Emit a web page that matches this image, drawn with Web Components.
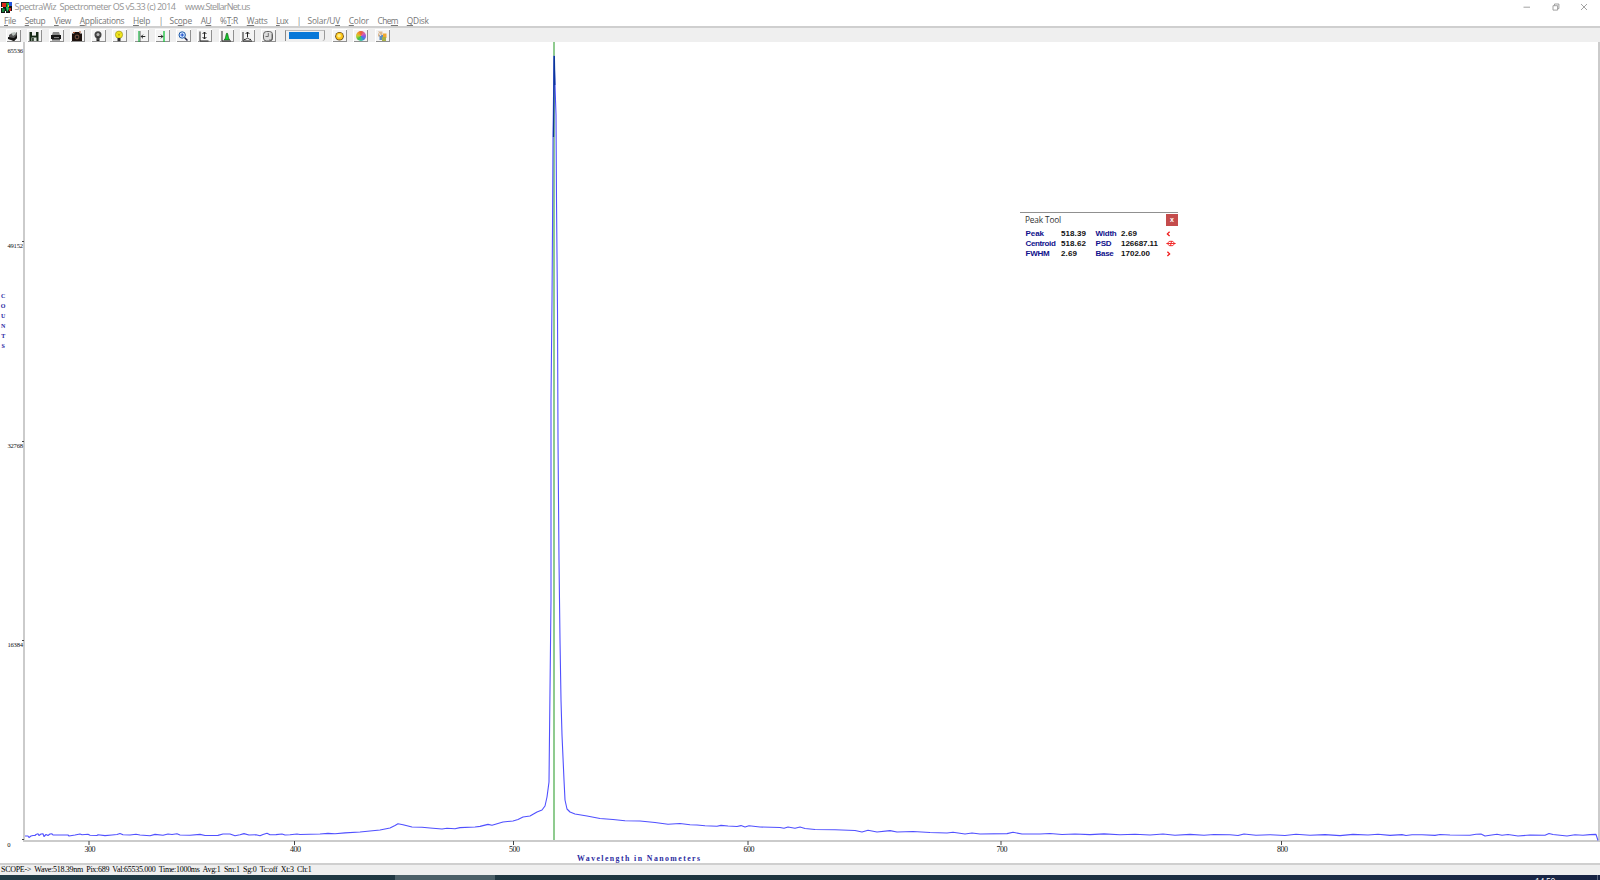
<!DOCTYPE html>
<html lang="en">
<head>
<meta charset="utf-8">
<title>SpectraWiz</title>
<style>
    html, body { margin: 0; height: 100%; overflow: hidden; background: #fff; }
</style>
</head>
<body>
<spectra-app></spectra-app>

<script>
// Inline text that is tracked in or out until it fills the given width
class FitText extends HTMLElement {
    constructor() {
        super();
        this.attachShadow({ mode: "open" });
        this.shadowRoot.innerHTML = `<style>
            :host { display: inline-block; flex: none; vertical-align: top; }
            span { white-space: pre; }
            ::slotted(u) { text-decoration-thickness: 1px; text-underline-offset: 1px; }
        </style><span><slot></slot></span>`;
    }

    connectedCallback() {
        const width = parseFloat(this.getAttribute("width"));
        const natural = this.shadowRoot.querySelector("span").getBoundingClientRect().width;
        if (!width || !natural) return;
        const gap = (width - natural) / this.textContent.length;
        this.style.letterSpacing = `${gap.toFixed(3)}px`;
        this.style.width = `${width}px`;
    }
}

class TitleBar extends HTMLElement {
    constructor() {
        super();
        this.attachShadow({ mode: "open" });
        this.shadowRoot.innerHTML = `
        <style>
            :host {
                display: flex;
                align-items: center;
                height: 14px;
                padding: 0 12px 0 1px;
                font: 9.1px/14px "Open Sans", sans-serif;
                color: #949494;
            }
            .logo { width: 11px; height: 11px; margin-right: 2.5px; }
            .site { margin-left: 9.5px; }
            .controls { display: flex; gap: 20.5px; margin-left: auto; margin-top: -1px; }
            .controls svg { width: 8px; height: 8px; fill: none; stroke: #8c8c8c; stroke-width: 0.8; }
        </style>
        <svg class="logo" viewBox="0 0 11 11">
            <rect width="11" height="11" fill="#161616"/>
            <path d="M1 1h4v4H1z" fill="#e02818"/>
            <path d="M5 1h3v4H6z" fill="#18a838"/>
            <path d="M8 0h3v4H8z" fill="#2454dc"/>
            <path d="M5 5l2-1 1 3-2 3z" fill="#20d060"/>
            <path d="M1 6l3 1-1 3H1z" fill="#14883c"/>
            <path d="M8 6h2v3H8z" fill="#d82018"/>
            <path d="M0 5h2v1H0zM4 9h1v2H4zM9 9h2v2H9z" fill="#fff"/>
            <path d="M7 3h1v2H7z" fill="#f0d820"/>
        </svg>
        <fit-text width="161">SpectraWiz  Spectrometer OS v5.33 (c) 2014</fit-text>
        <fit-text class="site" width="64.5">www.StellarNet.us</fit-text>
        <div class="controls">
            <svg viewBox="0 0 8 8"><path d="M.5 4.2h6.5"/></svg>
            <svg viewBox="0 0 8 8"><path d="M1 2.7h4.6v4.4H1zM2.5 2.5V1h4.4v4.6H5.8"/></svg>
            <svg viewBox="0 0 8 8"><path d="M1 1l6 6M7 1L1 7"/></svg>
        </div>`;
    }
}

const MENU = [
    ["<u>F</u>ile", 12], ["<u>S</u>etup", 20.5], ["<u>V</u>iew", 17], ["<u>A</u>pplications", 44.5],
    ["<u>H</u>elp", 17], ["|", 2], ["Sc<u>o</u>pe", 22.5], ["A<u>U</u>", 10.5], ["%<u>T</u>:R", 18],
    ["<u>W</u>atts", 20.5], ["<u>L</u>ux", 12], ["|", 2], ["Solar/U<u>V</u>", 32.5],
    ["<u>C</u>olor", 20], ["Che<u>m</u>", 20.5], ["<u>Q</u>Disk", 22]
];

class MenuBar extends HTMLElement {
    constructor() {
        super();
        this.attachShadow({ mode: "open" });
        this.shadowRoot.innerHTML = `
        <style>
            :host {
                display: flex;
                box-sizing: border-box;
                gap: 8.75px;
                height: 12px;
                padding: 0 0 0 4px;
                font: 8.4px/13px "Open Sans", sans-serif;
                color: #767676;
            }
        </style>
        ${MENU.map(([label, width]) => `<fit-text width="${width}">${label}</fit-text>`).join("")}`;
    }
}

// Drawn on a 12x12 grid
const ICONS = {
    open: `<path d="M2 5l3-2 2 1 3-2v6l-3 3-5-2z" fill="#555"/><path d="M1 7l6 1 3-3v3l-3 3-6-2z" fill="#111"/><path d="M4 3l4-1 1 2-3 2z" fill="#b8c0bc"/>`,
    save: `<path d="M1.5 2h9v9h-9z" fill="#142814"/><path d="M4 2h4v3.6H4z" fill="#eee"/><path d="M3.5 7.5h5V11h-5z" fill="#d8e0d8"/><path d="M4.2 8h1.5v3H4.2z" fill="#142814"/>`,
    print: `<path d="M3 2h6l1 3H2z" fill="#888"/><path d="M1 5h10v4H1z" fill="#151515"/><path d="M2 9h8v1.5H2z" fill="#555"/><path d="M4 7.6h5" stroke="#aaa" stroke-width=".8"/>`,
    camera: `<path d="M1 3.5h2L4 2h4l1 1.5h2V11H1z" fill="#1c120e"/><circle cx="6" cy="7" r="2.4" fill="#6c4a3a"/><circle cx="6" cy="7" r="1.2" fill="#111"/><path d="M2 2.5h2M8 2h2" stroke="#a8502c"/>`,
    bulbOff: `<circle cx="6" cy="4.7" r="3.5" fill="#444"/><circle cx="6" cy="4.5" r="1.5" fill="#bbb"/><path d="M4.5 7.5h3V11h-3z" fill="#222"/><path d="M5 9h2" stroke="#999" stroke-width=".6"/>`,
    bulbOn: `<circle cx="6" cy="4.7" r="3.6" fill="#f2e61c" stroke="#9a941c" stroke-width=".7"/><path d="M4.5 8h3v3.2h-3z" fill="#333"/><path d="M5 3.5l1 2 1-2" fill="none" stroke="#a09010" stroke-width=".6"/>`,
    left: `<path d="M4 1v11" stroke="#14b43c" stroke-width="1.2"/><path d="M5.2 1v11" stroke="#444" stroke-width=".6"/><path d="M10.3 6.5H6.2M8 4.7L6.2 6.5 8 8.3" fill="none" stroke="#111" stroke-width=".9"/>`,
    right: `<path d="M8 1v11" stroke="#14c43c" stroke-width="1.3"/><path d="M2 6.5h4.8M5 4.7l1.8 1.8L5 8.3" fill="none" stroke="#111" stroke-width=".9"/>`,
    zoom: `<path d="M7.5 7.5l3 3" stroke="#224" stroke-width="1.5"/><circle cx="5.2" cy="5" r="3.2" fill="#d4e8ff" stroke="#1c58a8" stroke-width="1"/><path d="M3.5 5h3.4M5.2 3.3v3.4" stroke="#1848c8" stroke-width="1"/>`,
    scaleY: `<path d="M2 1.5v9.5h8.5M6.5 2v7M4.6 4L6.5 2l1.9 2M4.6 7l1.9 2 1.9-2" fill="none" stroke="#222" stroke-width="1"/>`,
    peak: `<path d="M4 10C6 9 5.8 3 7 3s1 6 3 7z" fill="#18c830" stroke="#064808" stroke-width=".6"/><path d="M2 1v10h9" fill="none" stroke="#222" stroke-width="1"/>`,
    raise: `<path d="M2 2v9h9M3 9.5c3 0 2.5-1.5 3.5-1.5s1 1.5 3.5 1.5M6.5 7V2M4.6 4L6.5 2l1.9 2" fill="none" stroke="#222" stroke-width="1"/>`,
    clock: `<rect x="1.5" y="1.5" width="9" height="9.5" rx="3" fill="#ddd" stroke="#555" stroke-width=".9"/><path d="M6.3 3v3.5H3.5M7 10h3V4" fill="none" stroke="#555" stroke-width=".8"/>`,
    sun: `<circle cx="6.5" cy="6.3" r="4.3" fill="#6a4c10"/><circle cx="6.5" cy="6.2" r="3.4" fill="#ffc81c"/><circle cx="6.1" cy="5.7" r="1.8" fill="#fff08c"/>`,
    tools: `<path d="M2 1.5h4.5v5H2z" fill="#dcb890"/><path d="M3.5 5h4v5h-4z" fill="#5c8cc0"/><path d="M7 3.5h3.5V8H7z" fill="#f0a830"/><path d="M6 7h4v4H6z" fill="#a8b048"/><path d="M2 2l3 4" stroke="#eee"/>`
};

class ToolButton extends HTMLElement {
    constructor() {
        super();
        this.attachShadow({ mode: "open" });
        const name = this.getAttribute("icon");
        const face = name === "wheel" ? `<div class="wheel"></div>` : `<svg viewBox="0 0 12 12">${ICONS[name]}</svg>`;
        this.shadowRoot.innerHTML = `
        <style>
            :host {
                display: flex;
                box-sizing: border-box;
                align-items: center;
                justify-content: center;
                width: 15px;
                height: 13px;
                background: #f4f4f4;
                border: solid #fff;
                border-width: 1px 0 0 1px;
                box-shadow: inset -1px -1px #909090;
            }
            svg { width: 12px; height: 12px; margin-top: -1px; margin-right: 2px; }
            .wheel {
                width: 10px;
                height: 10px;
                margin-right: 1px;
                border-radius: 50%;
                background: conic-gradient(#e85c30, #e060a0, #9058e0, #4080e0, #30c0a0, #50c040, #c8d030, #f0a028, #e85c30);
            }
        </style>${face}`;
    }
}

class ToolBar extends HTMLElement {
    constructor() {
        super();
        this.attachShadow({ mode: "open" });
        const buttons = (names) => names.map((n) => `<tool-button icon="${n}"></tool-button>`).join("");
        this.shadowRoot.innerHTML = `
        <style>
            :host {
                display: flex;
                box-sizing: border-box;
                gap: 6.25px;
                height: 16px;
                padding: 1px 0 0 6px;
                background: #efefef;
                border-top: 2px solid #cfcfcf;
            }
            .progress {
                box-sizing: border-box;
                width: 40px;
                height: 11px;
                margin: 1px 1px 0 2.5px;
                padding: 0.5px 5px 1px 3px;
                border-left: 1px solid #888;
                border-top: 1px solid #bbb;
                border-right: 1px solid #999;
                border-bottom-right-radius: 3px;
            }
            .bar { height: 7.5px; background: #0878d8; }
        </style>
        ${buttons(["open", "save", "print", "camera", "bulbOff", "bulbOn", "left", "right", "zoom", "scaleY", "peak", "raise", "clock"])}
        <div class="progress"><div class="bar"></div></div>
        ${buttons(["sun", "wheel", "tools"])}`;
    }
}

// Trace of the scope, x,y in window pixels
const TRACE = `25,836 28,836 29,837.5 31,836 33,835.5 35,835.5 36,834.5 38,833.8 39,835.5 41,834 43,833.8 44,836.5 46,834.5
48,835.5 50,834 52,833.8 53,835 68,835 69,836 75,835 80,834 82,834.7 88,834.2 90,835.3 97,835.5 98,834.8 105,835.6
112,835 117,834.5 120,833.4 123,834.7 130,835 136,834.3 140,835 150,835.8 155,834.4 163,835.3 168,834 172,834.5
177,833.8 180,835 190,835.2 200,834.4 205,835.5 218,835.4 223,834 230,834 235,835.8 240,834.8 244,833.6 249,835
256,834.8 260,835.8 263,834.5 267,833.2 270,834.8 276,834.6 282,834 285,835 290,834.8 297,834 300,834.5 310,834.2
320,834 328,833.4 335,833.8 345,832.9 360,832 370,831 380,830 390,828 395,825.5 398,823.7 403,824.7 412,827 422,827.3
430,828 442,829 447,828.2 455,828.8 460,827.6 475,827 480,826.4 488,824.4 492,825.2 503,822 513,821 518,819.5 523,817
530,816 537,812 542,810 545,806 547,797 549,782 550,690 551,600 551,400 552,300 552.5,230 553,140 554,56
555,85 556,115 556.5,200 557.5,310 558,440 559,560 560,640 561,700 562,735 564,780 565,800 567,809 570,812 575,814
587,816 600,818.5 613,819.5 625,820.8 640,821 655,822.5 668,824.3 680,823.5 690,824.7 697,825 705,825.8 717,826.3
721,825.4 728,826 737,826.5 741,825.6 745,827 749,825.7 760,827 780,827.5 784,828.3 788,827 795,828.3 800,827
805,828.5 815,829.5 835,829.8 855,830.5 862,832 868,830.3 877,832 890,830.6 897,832 913,831.5 930,832.5 947,833
953,832.3 965,834 972,833 980,834 1007,833.6 1013,832.3 1022,834 1040,834 1050,833.5 1062,834.5 1075,834 1090,834.6
1104,833.9 1120,834.7 1135,834.2 1150,835 1163,834 1175,835.2 1190,834.4 1204,835.2 1214,834.5 1230,834.8 1238,835.5
1244,834 1256,835.2 1270,834.7 1285,835.5 1296,834.3 1310,835.3 1325,834.6 1340,835.6 1353,834.4 1368,835 1378,834.2
1390,835.4 1402,834.6 1406,835.5 1412,834.8 1422,834.7 1435,835.4 1440,834.5 1450,835 1470,835.2 1476,834.2 1481,834
1485,836 1490,835.3 1497,834.2 1502,835.3 1508,834.5 1518,836 1530,835 1545,835.3 1549,833.5 1553,834.5 1560,835.2
1567,836 1575,834.8 1583,835.2 1590,834.6 1596,834.4 1598,840.5`;

const Y_TICKS = [[65536, 50], [49152, 245.5], [32768, 445.5], [16384, 644.5], [0, 844]];
const X_TICKS = [[300, 89], [400, 294.5], [500, 513.5], [600, 748], [700, 1001], [800, 1281.5]];

class SpectrumPlot extends HTMLElement {
    constructor() {
        super();
        this.attachShadow({ mode: "open" });
        const yTicks = Y_TICKS.map(([value, y]) => `
            <text x="${value ? 7.5 : 7.3}" y="${y + 2.6}" ${value ? 'textLength="15.5"' : ""}>${value}</text>
            ${y > 60 ? `<path class="tick" d="M22 ${Math.floor(y - 4.5) + 0.5}h2"/>` : ""}`).join("");
        const xTicks = X_TICKS.map(([value, x]) => `
            <text class="x" x="${x + 1}" y="852" textLength="11">${value}</text>
            <path class="tick" d="M${x} 841v4"/>`).join("");
        const counts = [..."COUNTS"].map((c, i) => `<text class="counts" x="3.2" y="${297.6 + i * 10}">${c}</text>`).join("");
        this.shadowRoot.innerHTML = `
        <style>
            :host { display: block; height: 821px; }
            svg { display: block; width: 100%; height: 100%; }
            text { font: 6.6px "Liberation Serif", serif; fill: #111; }
            text.x { font-size: 8px; text-anchor: middle; }
            text.counts { font-size: 6px; font-weight: bold; fill: #2222a0; text-anchor: middle; }
            text.axis { font-size: 7.8px; font-weight: bold; fill: #2c2ca0; }
            .frame { fill: none; stroke: #cbcbcb; stroke-width: 2; }
            .tick { stroke: #444; }
            .cursor { stroke: #8fcb8f; stroke-width: 2; }
            .trace { fill: none; stroke: #5050ff; stroke-width: 1.1; stroke-linejoin: round; }
            .tip { fill: none; stroke: #0c3898; stroke-width: 1.3; }
        </style>
        <svg viewBox="0 42 1600 821">
            <path class="frame" d="M24 42v799H1599V42"/>
            <path class="cursor" d="M554 42v798"/>
            <polyline class="trace" points="${TRACE}"/>
            <path class="tip" d="M553.5 137L554.3 56L554.8 85"/>
            ${yTicks}${xTicks}${counts}
            <text class="axis" x="577" y="861.4" textLength="123">Wavelength in Nanometers</text>
        </svg>`;
    }
}

class PeakTool extends HTMLElement {
    constructor() {
        super();
        this.attachShadow({ mode: "open" });
        this.shadowRoot.innerHTML = `
        <style>
            :host {
                display: block;
                box-sizing: border-box;
                width: 158px;
                height: 50px;
                background: #fff;
                border-top: 1px solid #909090;
                font: bold 8px/12px "Liberation Sans", sans-serif;
                color: #111;
            }
            header {
                display: flex;
                align-items: center;
                justify-content: space-between;
                height: 15px;
                padding-left: 5px;
                font: 8.3px/13px "Open Sans", sans-serif;
                color: #333;
            }
            header fit-text { margin-top: -2px; }
            .close {
                width: 12px;
                height: 12px;
                margin-top: -1px;
                background: #c44c4c;
                color: #fff;
                font: bold 7px/11px "Liberation Sans", sans-serif;
                text-align: center;
            }
            .grid {
                display: grid;
                grid-template-columns: 35.5px 34.5px 25.5px 46px auto;
                grid-auto-rows: 10px;
                padding-left: 5.5px;
            }
            b { color: #10108c; }
            .nav { width: 10px; height: 10px; margin-left: -1px; fill: none; stroke: #f01818; stroke-width: 1.3; }
        </style>
        <header><fit-text width="36">Peak Tool</fit-text><span class="close">x</span></header>
        <div class="grid">
            <b><fit-text width="18.5">Peak</fit-text></b><fit-text width="25">518.39</fit-text>
            <b><fit-text width="21">Width</fit-text></b><fit-text width="16">2.69</fit-text>
            <svg class="nav" viewBox="0 0 10 10"><path d="M3.6 3.8L1.4 5.9l2.2 2.1"/></svg>
            <b><fit-text width="30">Centroid</fit-text></b><fit-text width="25">518.62</fit-text>
            <b><fit-text width="16">PSD</fit-text></b><fit-text width="37">126687.11</fit-text>
            <svg class="nav" viewBox="0 0 10 10"><path d="M.5 5.5h9M3.7 3L1.2 5.5 3.7 8M6.3 3l2.5 2.5L6.3 8M3.5 3.3h3M3.5 7.7h3M5.5 3.3l-1 4.4" stroke-width=".9"/></svg>
            <b><fit-text width="24">FWHM</fit-text></b><fit-text width="16">2.69</fit-text>
            <b><fit-text width="18">Base</fit-text></b><fit-text width="29">1702.00</fit-text>
            <svg class="nav" viewBox="0 0 10 10"><path d="M1.4 3.8l2.2 2.1L1.4 8"/></svg>
        </div>`;
    }
}

class StatusBar extends HTMLElement {
    constructor() {
        super();
        this.attachShadow({ mode: "open" });
        this.shadowRoot.innerHTML = `
        <style>
            :host {
                display: block;
                box-sizing: border-box;
                height: 12px;
                padding-left: 1px;
                background: #efefef;
                border-top: 2px solid #cfcfcf;
                font: 8px/10px "Liberation Serif", serif;
                color: #000;
            }
        </style><slot></slot>`;
    }
}

class TaskBar extends HTMLElement {
    constructor() {
        super();
        this.attachShadow({ mode: "open" });
        this.shadowRoot.innerHTML = `
        <style>
            :host {
                display: flex;
                justify-content: space-between;
                height: 5px;
                overflow: hidden;
                background: linear-gradient(90deg, #223c46, #1e343e 55%, #1c2c46 85%, #182444);
            }
            .active { width: 100px; height: 5px; margin-left: 395px; background: #4c6068; }
            .clock {
                height: 5px;
                padding: 2px 42px 0 0;
                border-right: 1px solid #5c6880;
                margin-right: 2px;
                font: 8.5px/10px "Open Sans", sans-serif;
                color: #fff;
            }
        </style>
        <div class="active"></div>
        <div class="clock"><fit-text width="20">14:50</fit-text></div>`;
    }
}

class SpectraApp extends HTMLElement {
    constructor() {
        super();
        this.attachShadow({ mode: "open" });
        this.shadowRoot.innerHTML = `
        <style>
            :host {
                display: flex;
                flex-direction: column;
                position: relative;
                width: 1600px;
                height: 880px;
                background: #fff;
            }
            title-bar, menu-bar, tool-bar, spectrum-plot, status-bar, task-bar { flex: none; }
            /* floating tool window */
            peak-tool { position: absolute; left: 1020px; top: 212px; }
        </style>
        <title-bar></title-bar>
        <menu-bar></menu-bar>
        <tool-bar></tool-bar>
        <spectrum-plot></spectrum-plot>
        <status-bar><fit-text width="310.5">SCOPE->  Wave:518.39nm  Pix:689  Val:65535.000  Time:1000ms  Avg:1  Sm:1  Sg:0  Tc:off  Xt:3  Ch:1</fit-text></status-bar>
        <task-bar></task-bar>
        <peak-tool></peak-tool>`;
    }
}

customElements.define("title-bar", TitleBar);
customElements.define("menu-bar", MenuBar);
customElements.define("tool-button", ToolButton);
customElements.define("tool-bar", ToolBar);
customElements.define("spectrum-plot", SpectrumPlot);
customElements.define("peak-tool", PeakTool);
customElements.define("status-bar", StatusBar);
customElements.define("task-bar", TaskBar);
customElements.define("spectra-app", SpectraApp);
// last, so that every label is laid out when it gets measured
customElements.define("fit-text", FitText);
</script>
</body>
</html>
